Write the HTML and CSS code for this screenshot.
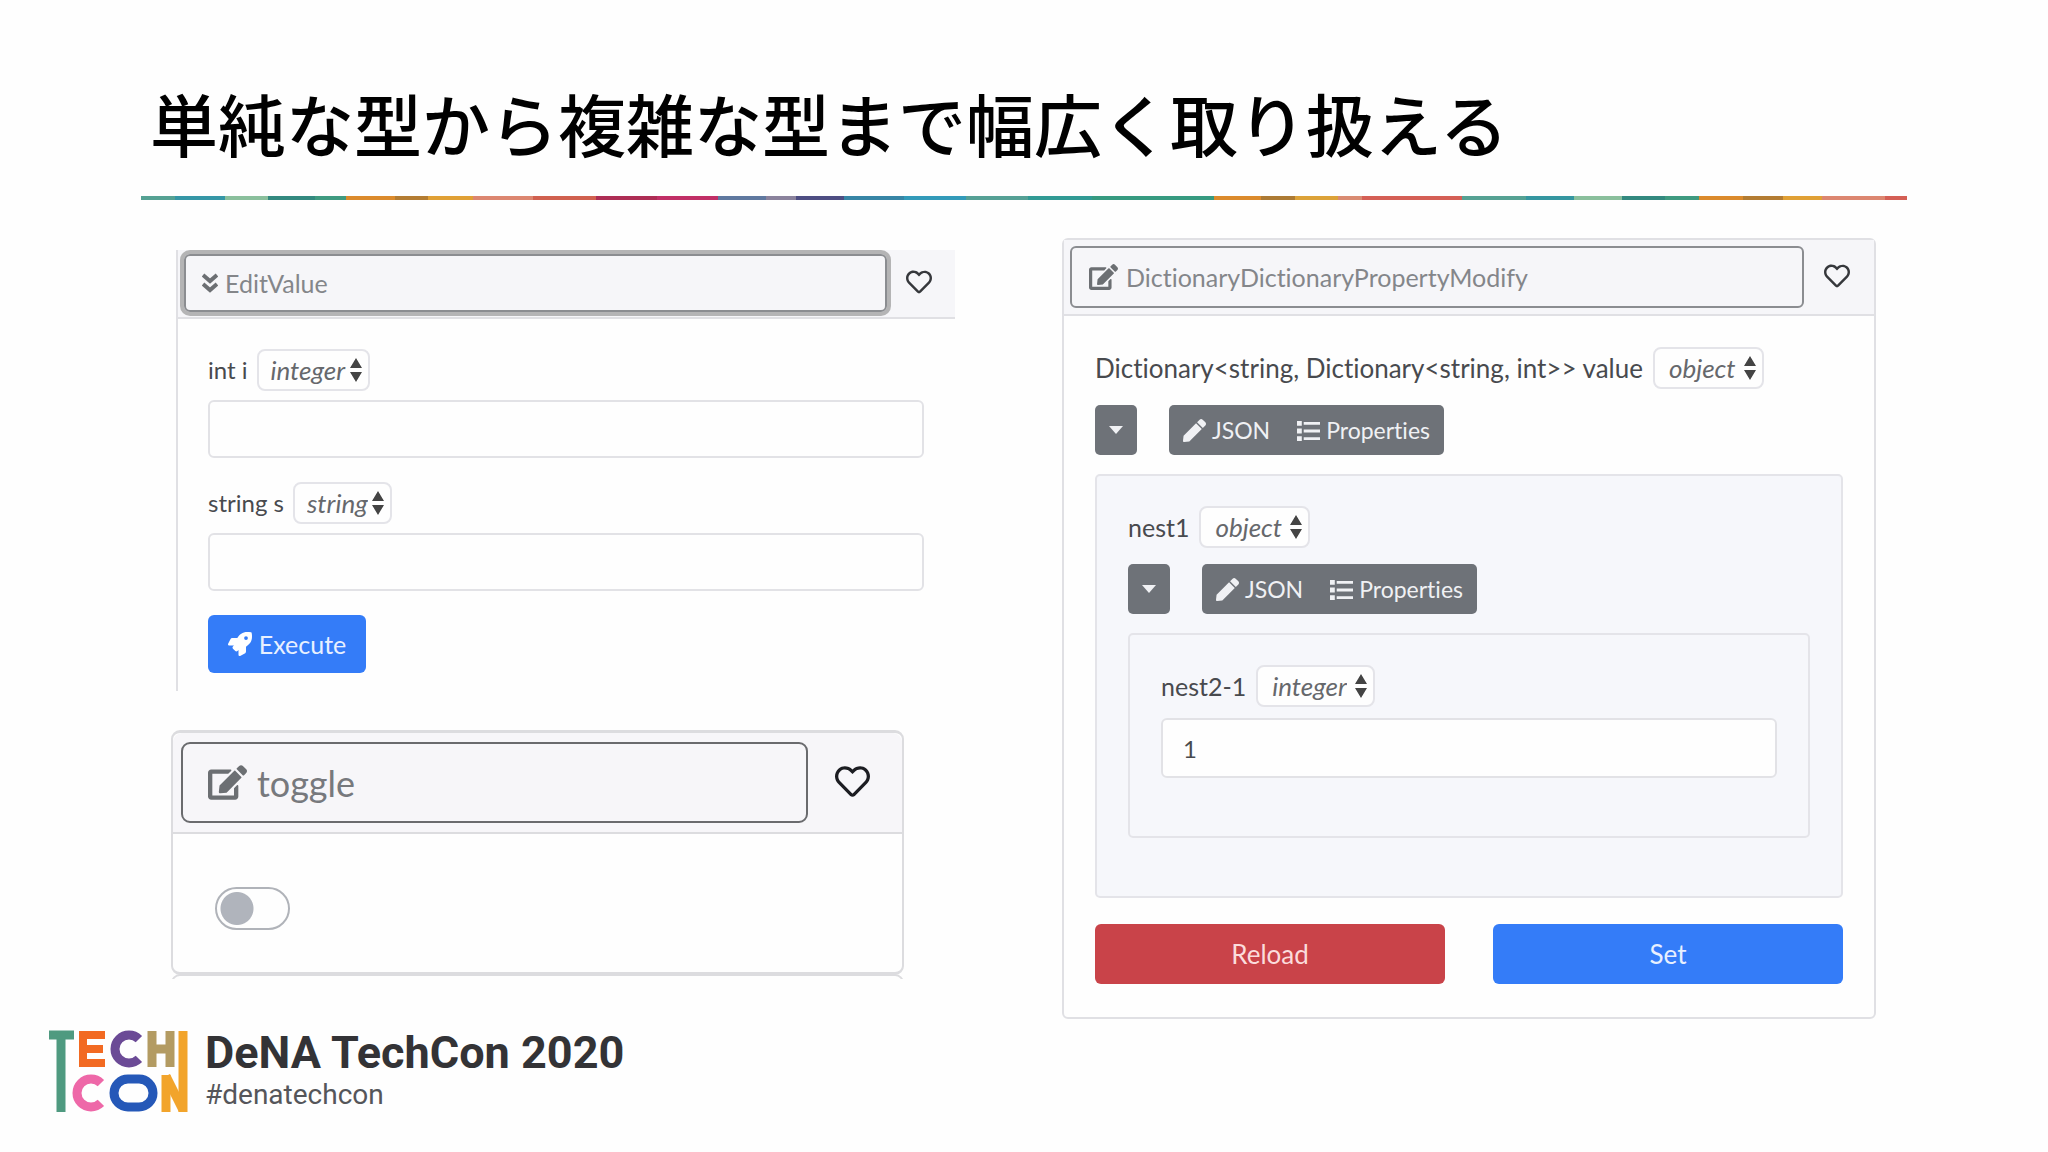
FILE: index.html
```html
<!DOCTYPE html>
<html lang="ja">
<head>
<meta charset="utf-8">
<title>DeNA TechCon 2020</title>
<link rel="stylesheet" href="styles.css">
</head>
<body>
<svg class="defs" aria-hidden="true">
  <symbol id="heart" viewBox="0 0 512 512"><path d="M458.4 64.3C400.6 15.7 311.3 23 256 79.3 200.7 23 111.4 15.6 53.6 64.3-21.6 127.6-10.6 230.8 43 285.5l175.4 178.7c10 10.2 23.4 15.9 37.6 15.9 14.3 0 27.6-5.6 37.6-15.8L469 285.6c53.5-54.7 64.7-157.9-10.6-221.3zm-23.6 187.5L259.4 430.5c-2.4 2.4-4.4 2.4-6.8 0L77.2 251.8c-36.5-37.2-43.9-107.6 7.3-150.7 38.9-32.7 98.9-27.8 136.5 10.5l35 35.7 35-35.7c37.8-38.5 97.8-43.2 136.5-10.6 51.1 43.1 43.5 113.9 7.3 150.8z"/></symbol>
  <symbol id="edit" viewBox="0 0 576 512"><path d="M402.6 83.2l90.2 90.2c3.8 3.8 3.8 10 0 13.8L274.4 405.6l-92.8 10.3c-12.4 1.4-22.9-9.1-21.5-21.5l10.3-92.8L388.8 83.2c3.8-3.8 10-3.8 13.8 0zm162-22.9l-48.8-48.8c-15.2-15.2-39.9-15.2-55.2 0l-35.4 35.4c-3.8 3.8-3.8 10 0 13.8l90.2 90.2c3.8 3.8 10 3.8 13.8 0l35.4-35.4c15.2-15.3 15.2-40 0-55.2zM384 346.2V448H64V128h229.8c3.2 0 6.2-1.3 8.5-3.5l40-40c7.6-7.6 2.2-20.5-8.5-20.5H48C21.5 64 0 85.5 0 112v352c0 26.5 21.5 48 48 48h352c26.5 0 48-21.5 48-48V306.2c0-10.7-12.9-16-20.5-8.5l-40 40c-2.2 2.3-3.5 5.3-3.5 8.5z"/></symbol>
  <symbol id="rocket" viewBox="0 0 512 512"><path d="M505.1 19.1c-1.2-5.5-6.7-11-12.2-12.2C460.7 0 435.5 0 410.4 0 307.2 0 245.3 55.2 199.1 128H94.8c-16.3 0-35.5 11.9-42.9 26.5L2.5 253.3A28.4 28.4 0 0 0 0 264a24 24 0 0 0 24 24h103.8l-22.5 22.5c-11.3 11.3-13 32.2 0 45.2l50.9 50.9c11.2 11.2 32.2 13.2 45.3 0l22.5-22.4V488a24 24 0 0 0 24 24 28.6 28.6 0 0 0 10.7-2.5l98.7-49.4c14.7-7.3 26.5-26.5 26.5-42.9V312.8c72.6-46.3 128.1-108.4 128.1-211.1 0-25.2 0-50.4-6.9-82.6zM384 168a40 40 0 1 1 40-40 40 40 0 0 1-40 40z"/></symbol>
  <symbol id="pen" viewBox="0 0 512 512"><path d="M290.74 93.24l128.02 128.02-277.99 277.99-114.14 12.6C11.35 513.54-1.56 500.62.14 485.34l12.7-114.22 277.9-277.88zm207.2-19.06l-60.11-60.11c-18.75-18.75-49.16-18.75-67.91 0l-56.55 56.55 128.02 128.02 56.55-56.55c18.75-18.76 18.75-49.16 0-67.91z"/></symbol>
  <symbol id="list" viewBox="0 0 24 24"><path d="M0 2h5v5H0zM0 10h5v5H0zM0 18h5v5H0zM7 3h17v3H7zM7 11h17v3H7zM7 19h17v3H7z"/></symbol>
  <symbol id="down" viewBox="0 0 16 20"><path d="M1 2l7 6 7-6M1 11l7 6 7-6" fill="none" stroke="currentColor" stroke-width="4"/></symbol>
  <symbol id="caret" viewBox="0 0 14 8"><path d="M0 0h14L7 8z"/></symbol>
</svg>

<header class="slide-head">
  <h1>単純な型から複雑な型まで幅広く取り扱える</h1>
  <svg class="rule" viewBox="141 0 1766 4" preserveAspectRatio="none" aria-hidden="true">
    <rect x="141" width="35" height="4" fill="#55a193"/><rect x="175" width="51" height="4" fill="#3596a6"/>
    <rect x="225" width="44" height="4" fill="#8abf9c"/><rect x="268" width="48" height="4" fill="#33897f"/>
    <rect x="315" width="32" height="4" fill="#3f9a80"/><rect x="346" width="50" height="4" fill="#db8a2c"/>
    <rect x="395" width="34" height="4" fill="#b37c32"/><rect x="428" width="46" height="4" fill="#e0a035"/>
    <rect x="473" width="61" height="4" fill="#dc8670"/><rect x="533" width="64" height="4" fill="#d0604f"/>
    <rect x="596" width="62" height="4" fill="#ad2d54"/><rect x="657" width="62" height="4" fill="#c02f66"/>
    <rect x="718" width="49" height="4" fill="#5f789f"/><rect x="766" width="31" height="4" fill="#8a829c"/>
    <rect x="796" width="49" height="4" fill="#4d4d82"/><rect x="844" width="61" height="4" fill="#3785a5"/>
    <rect x="904" width="63" height="4" fill="#329ab9"/><rect x="966" width="63" height="4" fill="#55a095"/>
    <rect x="1028" width="65" height="4" fill="#319a94"/><rect x="1092" width="123" height="4" fill="#369a80"/>
    <rect x="1214" width="48" height="4" fill="#db8a2c"/><rect x="1261" width="35" height="4" fill="#ac7a34"/>
    <rect x="1295" width="44" height="4" fill="#dca238"/><rect x="1338" width="25" height="4" fill="#d98b72"/>
    <rect x="1362" width="101" height="4" fill="#d45f55"/><rect x="1462" width="65" height="4" fill="#55a193"/>
    <rect x="1526" width="49" height="4" fill="#3596a0"/><rect x="1574" width="49" height="4" fill="#8abf9c"/>
    <rect x="1622" width="44" height="4" fill="#33897f"/><rect x="1665" width="35" height="4" fill="#3f9a80"/>
    <rect x="1699" width="45" height="4" fill="#db8a2c"/><rect x="1743" width="41" height="4" fill="#b37c32"/>
    <rect x="1783" width="40" height="4" fill="#e0a035"/><rect x="1822" width="64" height="4" fill="#dc8670"/>
    <rect x="1885" width="22" height="4" fill="#d45f55"/>
  </svg>
</header>

<main class="panels">
  <div class="column">
    <section class="card card-open">
      <div class="card-head">
        <button class="title-btn focused" type="button"><svg class="ic-down"><use href="#down"/></svg>EditValue</button>
        <button class="like" type="button" aria-label="Favorite"><svg><use href="#heart"/></svg></button>
      </div>
      <form class="card-body">
        <div class="field">
          <div class="field-label"><label for="int-i">int i</label>
            <select aria-label="int i type"><option>integer</option></select></div>
          <input class="text" id="int-i" type="text">
        </div>
        <div class="field">
          <div class="field-label"><label for="string-s">string s</label>
            <select aria-label="string s type"><option>string</option></select></div>
          <input class="text" id="string-s" type="text">
        </div>
        <button class="btn primary execute" type="button"><svg><use href="#rocket"/></svg>Execute</button>
      </form>
    </section>

    <section class="card card-toggle">
      <div class="card-head">
        <button class="title-btn" type="button"><svg class="ic-edit"><use href="#edit"/></svg>toggle</button>
        <button class="like" type="button" aria-label="Favorite"><svg><use href="#heart"/></svg></button>
      </div>
      <div class="card-body"><input class="switch" type="checkbox" aria-label="toggle"></div>
    </section>
    <div class="next-card"></div>
  </div>

  <section class="card card-dict">
    <div class="card-head">
      <button class="title-btn" type="button"><svg class="ic-edit"><use href="#edit"/></svg>DictionaryDictionaryPropertyModify</button>
      <button class="like" type="button" aria-label="Favorite"><svg><use href="#heart"/></svg></button>
    </div>
    <form class="card-body">
      <div class="field-label root-label"><label for="dict-type">Dictionary&lt;string, Dictionary&lt;string, int&gt;&gt; value</label>
        <select id="dict-type"><option>object</option></select></div>
      <div class="tools">
        <button class="fold" type="button" aria-label="Collapse"><svg><use href="#caret"/></svg></button>
        <div class="group">
          <button type="button"><svg><use href="#pen"/></svg>JSON</button>
          <button type="button"><svg><use href="#list"/></svg>Properties</button>
        </div>
      </div>
      <div class="nest">
        <div class="field-label"><label for="nest1-type">nest1</label>
          <select id="nest1-type"><option>object</option></select></div>
        <div class="tools">
          <button class="fold" type="button" aria-label="Collapse"><svg><use href="#caret"/></svg></button>
          <div class="group">
            <button type="button"><svg><use href="#pen"/></svg>JSON</button>
            <button type="button"><svg><use href="#list"/></svg>Properties</button>
          </div>
        </div>
        <div class="nest">
          <div class="field-label"><label for="nest2-1">nest2-1</label>
            <select aria-label="nest2-1 type"><option>integer</option></select></div>
          <input class="text" id="nest2-1" type="text" value="1">
        </div>
      </div>
      <div class="actions">
        <button class="btn danger" type="button">Reload</button>
        <button class="btn primary" type="button">Set</button>
      </div>
    </form>
  </section>
</main>

<footer class="brand">
  <svg class="logo" viewBox="0 0 139 82" role="img" aria-label="TECH CON" fill="none" stroke-width="9">
    <g stroke="#4f9a80"><line x1="0" y1="5" x2="25" y2="5"/><line x1="12" y1="1" x2="12" y2="82"/></g>
    <g stroke="#f26a22" stroke-width="8"><line x1="34" y1="1" x2="34" y2="37"/><line x1="30" y1="5" x2="56" y2="5"/><line x1="30" y1="19" x2="54" y2="19"/><line x1="30" y1="33" x2="56" y2="33"/></g>
    <circle cx="80" cy="19" r="14" stroke="#6b4a96" pathLength="360" stroke-dasharray="270 90" transform="rotate(45 80 19)"/>
    <g stroke="#b39b62"><line x1="103" y1="1" x2="103" y2="37"/><line x1="121" y1="1" x2="121" y2="37"/><line x1="103" y1="19" x2="121" y2="19"/></g>
    <circle cx="42" cy="63" r="14" stroke="#ee68a8" pathLength="360" stroke-dasharray="270 90" transform="rotate(45 42 63)"/>
    <rect x="65" y="49" width="39" height="28" rx="14" stroke="#2558b8"/>
    <g stroke="#f2a42b"><line x1="117" y1="45" x2="117" y2="82"/><line x1="134" y1="1" x2="134" y2="82"/><line x1="117" y1="46" x2="134" y2="80"/></g>
  </svg>
  <div>
    <p class="event">DeNA TechCon 2020</p>
    <p class="tag">#denatechcon</p>
  </div>
</footer>
</body>
</html>
```
FILE: styles.css
```css
* { box-sizing: border-box; }
body {
  margin: 0;
  background: #fefefe;
  color: #484a4e;
  font: 24px/32px Lato, "Noto Sans CJK JP", sans-serif;
  font-variant-ligatures: none;
}
button, input, select { font: inherit; font-variant-ligatures: inherit; color: inherit; margin: 0; }
button { display: flex; align-items: center; border: 0; padding: 0; background: none; }
svg { fill: currentColor; flex: none; }
p, h1 { margin: 0; }
.defs { display: none; }

.slide-head { padding: 77px 141px 0; }
h1 {
  padding-left: 9px;
  color: #000;
  font: 500 68px/92px "Noto Sans CJK JP", sans-serif;
}
.rule { display: block; width: 100%; height: 4px; margin-top: 27px; }

.panels {
  display: grid;
  grid-template-columns: 784fr 814fr;
  gap: 107px;
  align-items: start;
  padding: 38px 172px 0 171px;
}

.card { border: 2px solid #e0e0e4; border-radius: 6px; background: #fefefe; }
.card-head {
  display: flex;
  align-items: center;
  border-bottom: 2px solid #e0e0e4;
  background: #f6f6f9;
}
.title-btn {
  flex: 1;
  border: 2px solid #8b8d91;
  border-radius: 6px;
  color: #84868a;
  font-size: 25px;
}
.title-btn svg { color: #6c6f73; }
.like { justify-content: center; padding: 0 5px 2px 0; color: #36383c; }
.like svg { width: 26px; height: 26px; }

.card-open { margin: 12px 0 0 5px; border-width: 0 0 0 2px; border-radius: 0; }
.card-open .card-head { padding: 4px 0 5px 6px; }
.card-open .title-btn { height: 58px; padding-left: 16px; gap: 7px; }
.card-open .like { width: 68px; }
.focused { box-shadow: 0 0 0 4px #b4b4b5; }
.ic-down { width: 16px; height: 20px; }
.card-open .card-body { padding: 30px 31px 18px 30px; }

.field { margin-bottom: 24px; }
.field-label { display: flex; align-items: center; gap: 9px; height: 42px; }
select {
  appearance: none;
  height: 42px;
  padding: 0 22px 0 12px;
  border: 2px solid #e4e4e9;
  border-radius: 8px;
  color: #66686c;
  font-size: 26px;
  font-style: italic;
  background: #fefefe url("data:image/svg+xml,%3Csvg xmlns='http://www.w3.org/2000/svg' width='12' height='24'%3E%3Cpath d='M0 10 6 0l6 10zM0 14h12l-6 10z' fill='%23444'/%3E%3C/svg%3E") no-repeat right 6px center;
}
.text {
  display: block;
  width: 100%;
  height: 58px;
  margin-top: 9px;
  padding: 0 20px;
  border: 2px solid #e2e2e6;
  border-radius: 6px;
  background: #fefefe;
}
.btn { justify-content: center; height: 60px; border-radius: 6px; color: #e8f0ff; font-size: 26px; }
.primary { background: #347cf8; }
.danger { background: #c94349; color: #fbdcdc; }
.execute { width: 158px; height: 58px; gap: 7px; font-size: 25px; }
.execute svg { width: 24px; height: 24px; color: #fff; }

.card-toggle {
  width: 94%;
  max-width: 733px;
  margin-top: 39px;
  border-width: 3px 2px;
  border-color: #dcdcdf;
  border-radius: 9px;
}
.card-toggle .card-head { padding: 9px 0 9px 8px; border-color: #dcdcdf; background: #f7f6f9; border-radius: 9px 9px 0 0; }
.card-toggle .title-btn { height: 81px; padding-left: 25px; gap: 10px; border-color: #6a6b6e; border-radius: 9px; font-size: 36px; color: #77797d; }
.card-toggle .ic-edit { width: 39px; height: 35px; }
.card-toggle .like { width: 94px; color: #1c1d22; }
.card-toggle .like svg { width: 35px; height: 35px; }
.card-toggle .card-body { padding: 53px 42px 42px; }
.switch {
  appearance: none;
  display: block;
  width: 75px;
  height: 43px;
  border: 2px solid #b0b3b9;
  border-radius: 22px;
  background: radial-gradient(circle 17px at 20px 50%, #b0b4bc 16px, transparent 17px);
}
/* Top edge of the card that follows in the list, cut off by the panel */
.next-card { width: 94%; max-width: 733px; height: 5px; margin-top: -1px; overflow: hidden; }
.next-card::before {
  content: "";
  display: block;
  height: 24px;
  border: 2px solid #dcdcdf;
  border-radius: 9px;
}

.card-dict .card-head { padding: 6px 0 6px 6px; }
.card-dict .title-btn { height: 62px; padding-left: 17px; gap: 8px; }
.card-dict .ic-edit { width: 29px; height: 26px; }
.card-dict .like { width: 70px; }
.card-dict .card-body { padding: 31px 31px 33px; }
.card-dict .field-label { font-size: 25px; gap: 10px; }
.card-dict .root-label { font-size: 26px; }
.card-dict select { padding: 0 26px 0 14px; }
.card-dict .text { height: 60px; margin-top: 11px; }
.tools { display: flex; gap: 32px; margin-top: 16px; }
.fold, .group { height: 50px; border-radius: 5px; background: #6e7278; color: #f0f1f4; }
.fold { justify-content: center; width: 42px; }
.fold svg { width: 14px; height: 8px; }
.group { display: flex; gap: 27px; padding: 0 14px; font-size: 23px; }
.group button { gap: 6px; }
.group svg { width: 23px; height: 23px; }
.nest {
  margin-top: 19px;
  padding: 30px 31px 58px;
  border: 2px solid #e4e4e9;
  border-radius: 5px;
  background: #f6f7fb;
}
.actions { display: grid; grid-template-columns: 1fr 1fr; gap: 48px; margin-top: 26px; }

.brand { display: flex; gap: 17px; padding: 11px 49px 0; font-family: Roboto, sans-serif; }
.logo { width: 139px; height: 82px; }
.logo * { fill: none; }
.event { color: #333336; font-size: 45px; line-height: 46px; font-weight: 700; }
.tag { color: #55565a; font-size: 28px; line-height: 38px; }
```
